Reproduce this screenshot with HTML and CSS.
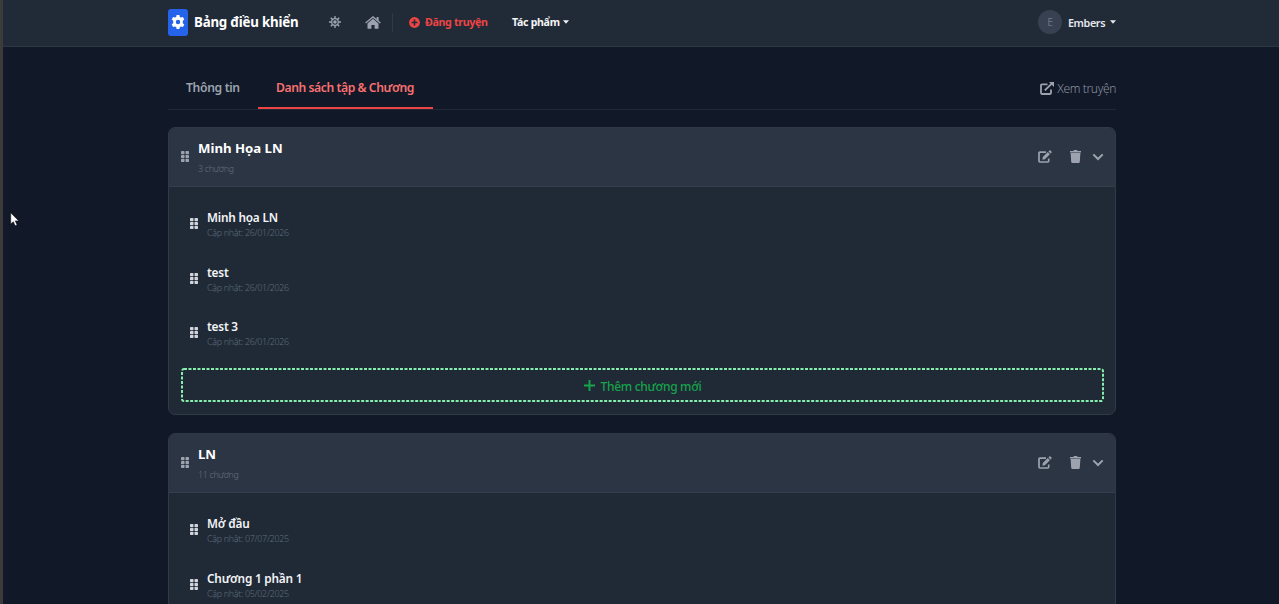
FILE: index.html
```html
<!DOCTYPE html>
<html lang="vi">
<head>
    <meta charset="UTF-8">
    <meta name="viewport" content="width=device-width, initial-scale=1.0">
    <title>Bảng điều khiển</title>

    <link rel="stylesheet" href="styles.css">
</head>
<body>

    <svg class="sprite" xmlns="http://www.w3.org/2000/svg">
        <symbol id="grip" viewBox="0 0 8 11">
            <rect x="0" y="0" width="3.5" height="3.2" rx=".7"/><rect x="4.5" y="0" width="3.5" height="3.2" rx=".7"/>
            <rect x="0" y="3.9" width="3.5" height="3.2" rx=".7"/><rect x="4.5" y="3.9" width="3.5" height="3.2" rx=".7"/>
            <rect x="0" y="7.8" width="3.5" height="3.2" rx=".7"/><rect x="4.5" y="7.8" width="3.5" height="3.2" rx=".7"/>
        </symbol>
        <symbol id="edit" viewBox="0 0 14 13">
            <path d="M8 2.2H1.9Q1 2.2 1 3.1v8Q1 12 1.9 12h7.9q.9 0 .9-.9V8.6" fill="none" stroke="currentColor" stroke-width="1.7"/>
            <path d="M4.4 9.7l.4-2.6 5-5 2.1 2.1-5 5zM10.5 1.4l.8-.8q.6-.6 1.2 0l.9.9q.6.6 0 1.2l-.8.8z"/>
        </symbol>
        <symbol id="trash" viewBox="0 0 11 13">
            <path d="M3.4.9L3.9.1h3.2l.5.8H11v1.5H0V.9zM.6 3.1h9.8l-.6 8.6q-.1 1.2-1.3 1.2h-6q-1.2 0-1.3-1.2z"/>
        </symbol>
        <symbol id="chevron" viewBox="0 0 12 8">
            <path d="M1.3 1.4L6 6l4.7-4.6" fill="none" stroke="currentColor" stroke-width="2"/>
        </symbol>
        <symbol id="caret" viewBox="0 0 6 4">
            <path d="M0 .3h6L3 3.7z"/>
        </symbol>
    </svg>

    <header class="navbar">
        <div class="container nav-inner">
            <div class="logo">
                <svg width="14" height="14" viewBox="0 0 14 14">
                    <path fill="#fff" fill-rule="evenodd" d="M5.6 0h2.8l.4 1.9 1.2.7 1.9-.7 1.4 2.5-1.5 1.4v2.4l1.5 1.4-1.4 2.5-1.9-.7-1.2.7-.4 1.9H5.6l-.4-1.9-1.2-.7-1.9.7L.7 9.6l1.5-1.4V5.8L.7 4.4l1.4-2.5 1.9.7 1.2-.7zM7 4.8a2.2 2.2 0 1 0 0 4.4 2.2 2.2 0 0 0 0-4.4z"/>
                </svg>
            </div>
            <span class="brand">Bảng điều khiển</span>

            <svg class="sun" width="12" height="12" viewBox="0 0 12 12">
                <path fill="none" stroke="currentColor" stroke-width="1.4" d="M6 0v2.5M6 9.5V12M0 6h2.5M9.5 6H12M1.8 1.8l1.7 1.7M8.5 8.5l1.7 1.7M1.8 10.2l1.7-1.7M8.5 3.5l1.7-1.7"/>
                <circle cx="6" cy="6" r="3.3" fill="none" stroke="currentColor" stroke-width="1.3"/>
                <circle cx="6" cy="6" r="1.8"/>
            </svg>
            <svg class="home" width="16" height="13" viewBox="0 0 16 13">
                <path d="M8 2.8l5.5 4.6v4.8q0 .6-.6.6H9.6V8.9H6.4v3.9H3.1q-.6 0-.6-.6V7.4z"/>
                <path d="M.6 7L8 .9 15.4 7" fill="none" stroke="currentColor" stroke-width="1.3"/>
                <path d="M11.6 1h2v4l-2-1.6z"/>
            </svg>
            <span class="divider"></span>

            <a class="post">
                <svg width="11" height="11" viewBox="0 0 11 11">
                    <circle cx="5.5" cy="5.5" r="5.4"/>
                    <path d="M5.5 2.6v5.8M2.6 5.5h5.8" stroke="#1f2937" stroke-width="1.6"/>
                </svg>
                <span>Đăng truyện</span>
            </a>
            <a class="works">
                <span>Tác phẩm</span>
                <svg width="6" height="4"><use href="#caret"/></svg>
            </a>

            <div class="user">
                <span class="avatar">E</span>
                <span class="name">Embers</span>
                <svg width="6" height="4"><use href="#caret"/></svg>
            </div>
        </div>
    </header>

    <main class="container">

        <nav class="tabs">
            <a class="tab tab-info">Thông tin</a>
            <a class="tab tab-list active">Danh sách tập &amp; Chương</a>
            <a class="view">
                <svg width="14" height="13" viewBox="0 0 14 13">
                    <path d="M7.5 2.4H1.9Q1 2.4 1 3.3v7.8q0 .9.9.9h8.2q.9 0 .9-.9V7.6" fill="none" stroke="currentColor" stroke-width="1.8"/>
                    <path d="M4.8 8.4L12 1.4" stroke="currentColor" stroke-width="1.9"/>
                    <path d="M9 0h5v5z"/>
                </svg>
                <span>Xem truyện</span>
            </a>
        </nav>

        <section class="volume">
            <div class="volume-head">
                <svg class="grip" width="8" height="11"><use href="#grip"/></svg>
                <div class="volume-text">
                    <h2>Minh Họa LN</h2>
                    <p>3 chương</p>
                </div>
                <div class="actions">
                    <svg width="14" height="13"><use href="#edit"/></svg>
                    <svg class="trash" width="11" height="13"><use href="#trash"/></svg>
                    <svg class="chevron" width="12" height="8"><use href="#chevron"/></svg>
                </div>
            </div>
            <div class="chapters">
                <div class="chapter">
                    <svg class="grip" width="8" height="11"><use href="#grip"/></svg>
                    <div>
                        <h3>Minh họa LN</h3>
                        <p>Cập nhật: 26/01/2026</p>
                    </div>
                </div>
                <div class="chapter">
                    <svg class="grip" width="8" height="11"><use href="#grip"/></svg>
                    <div>
                        <h3>test</h3>
                        <p>Cập nhật: 26/01/2026</p>
                    </div>
                </div>
                <div class="chapter">
                    <svg class="grip" width="8" height="11"><use href="#grip"/></svg>
                    <div>
                        <h3>test 3</h3>
                        <p>Cập nhật: 26/01/2026</p>
                    </div>
                </div>
                <div class="add">
                    <svg class="dashes" width="923" height="34">
                        <rect x="1" y="1" width="921" height="32" rx="2"/>
                    </svg>
                    <svg width="11" height="11" viewBox="0 0 11 11">
                        <path d="M5.5 0v11M0 5.5h11" stroke="currentColor" stroke-width="1.9"/>
                    </svg>
                    <span>Thêm chương mới</span>
                </div>
            </div>
        </section>

        <section class="volume">
            <div class="volume-head">
                <svg class="grip" width="8" height="11"><use href="#grip"/></svg>
                <div class="volume-text">
                    <h2>LN</h2>
                    <p>11 chương</p>
                </div>
                <div class="actions">
                    <svg width="14" height="13"><use href="#edit"/></svg>
                    <svg class="trash" width="11" height="13"><use href="#trash"/></svg>
                    <svg class="chevron" width="12" height="8"><use href="#chevron"/></svg>
                </div>
            </div>
            <div class="chapters">
                <div class="chapter">
                    <svg class="grip" width="8" height="11"><use href="#grip"/></svg>
                    <div>
                        <h3>Mở đầu</h3>
                        <p>Cập nhật: 07/07/2025</p>
                    </div>
                </div>
                <div class="chapter">
                    <svg class="grip" width="8" height="11"><use href="#grip"/></svg>
                    <div>
                        <h3>Chương 1 phần 1</h3>
                        <p>Cập nhật: 05/02/2025</p>
                    </div>
                </div>
            </div>
        </section>

    </main>

    <svg class="cursor" width="10" height="15" viewBox="0 0 10 15">
        <path d="M.7.8v11.3l2.6-2.4 1.8 4.1 2-.9-1.8-4h3.5z" fill="#fff" stroke="#0b0f18" stroke-width=".6"/>
    </svg>

</body>
</html>
```
FILE: styles.css
```css
*{
    box-sizing: border-box;
    margin: 0;
    padding: 0;
}

body{
    height: 604px;
    overflow: hidden;
    background-color: #111827;
    border-left: 3px solid #3b3b3b;
    font-family: "Noto Sans", "Open Sans", sans-serif;
    font-size: 12px;
    color: #f3f4f6;
}

svg{
    display: block;
    flex-shrink: 0;
    fill: currentColor;
}

.sprite{
    display: none;
}

.container{
    width: 948px;
    margin-left: 165px;
}

.navbar{
    height: 47px;
    background-color: #212b38;
    border-bottom: 1px solid #2c3644;
}

.nav-inner{
    display: flex;
    align-items: center;
    height: 44px;
    white-space: nowrap;
}

.logo{
    width: 20px;
    height: 27px;
    border-radius: 3px;
    background-color: #2563eb;
    display: flex;
    align-items: center;
    justify-content: center;
}

.brand{
    width: 104px;
    margin-left: 6px;
    font-size: 13.3px;
    font-weight: 700;
    letter-spacing: -.2px;
    color: #fff;
}

.sun{
    margin-left: 31px;
    color: #9ca3af;
}

.home{
    margin-left: 24px;
    color: #9ca3af;
}

.divider{
    width: 1px;
    height: 19px;
    margin-left: 11px;
    background-color: #2f3947;
}

.post{
    display: flex;
    align-items: center;
    width: 80px;
    margin-left: 16px;
    gap: 5px;
    font-size: 10.7px;
    font-weight: 700;
    letter-spacing: -.35px;
    color: #ef4444;
}

.works{
    display: flex;
    align-items: center;
    justify-content: space-between;
    width: 57px;
    margin-left: 23px;
    font-size: 10.6px;
    font-weight: 700;
    letter-spacing: -.3px;
}

.user{
    display: flex;
    align-items: center;
    margin-left: auto;
    font-weight: 600;
    color: #e5e7eb;
}

.avatar{
    width: 24px;
    height: 24px;
    border-radius: 50%;
    background-color: #374151;
    color: #6b7280;
    font-size: 10px;
    font-weight: 400;
    line-height: 25px;
    text-align: center;
}

.name{
    width: 42px;
    margin-left: 6px;
    font-size: 10.8px;
    letter-spacing: -.4px;
}

.tabs{
    display: flex;
    height: 46px;
    margin-top: 17px;
    margin-bottom: 17px;
    border-bottom: 1px solid #1f2937;
    white-space: nowrap;
}

.tab{
    height: 45px;
    padding: 0 18px;
    line-height: 48px;
    font-size: 12.2px;
    font-weight: 600;
    letter-spacing: -.45px;
    color: #9ca3af;
    border-bottom: 2px solid transparent;
}

.tab-info{
    width: 90px;
    letter-spacing: -.36px;
}

.tab-list{
    width: 175px;
}

.tab.active{
    color: #f87171;
    border-bottom-color: #ef4444;
}

.view{
    display: flex;
    align-items: center;
    gap: 3px;
    height: 48px;
    margin-left: auto;
    font-size: 12px;
    font-weight: 300;
    letter-spacing: -.36px;
    color: #8b93a0;
}

.view svg{
    color: #9ca3af;
}

.volume{
    height: 288px;
    margin-bottom: 18px;
    border: 1px solid #2f3947;
    border-radius: 7px;
    background-color: #202a37;
    overflow: hidden;
}

.volume-head{
    display: flex;
    align-items: center;
    height: 58.5px;
    padding: 0 12px;
    background-color: #2c3543;
    border-bottom: 1px solid #343e4c;
    color: #9ca3af;
}

.volume-text{
    margin-left: 9px;
    padding-top: 2px;
    white-space: nowrap;
}

.volume h2{
    font-size: 13.2px;
    line-height: 20px;
    font-weight: 700;
    color: #fff;
}

.volume-text p{
    margin-top: 3px;
    font-size: 8.9px;
    line-height: 16px;
    font-weight: 300;
    letter-spacing: -.32px;
    color: #657080;
}

.actions{
    display: flex;
    align-items: center;
    margin-left: auto;
}

.trash{
    margin-left: 18px;
}

.chevron{
    margin: 0 -1px 0 11px;
}

.chapters{
    padding: 9.5px 11px 12px 12px;
}

.chapter{
    display: flex;
    align-items: center;
    height: 54.7px;
    padding-left: 9px;
    white-space: nowrap;
}

.chapter .grip{
    margin-right: 9px;
    color: #d1d5db;
}

.chapter > div{
    padding-top: 3px;
}

.chapter h3{
    font-size: 11.8px;
    line-height: 15px;
    font-weight: 600;
    letter-spacing: -.2px;
    color: #f3f4f6;
}

.chapter p{
    font-size: 8.9px;
    line-height: 15px;
    font-weight: 300;
    letter-spacing: -.28px;
    color: #5f6a7a;
}

.add{
    position: relative;
    display: flex;
    align-items: center;
    justify-content: center;
    gap: 6px;
    height: 34px;
    margin-top: 8px;
    font-size: 12px;
    font-weight: 500;
    letter-spacing: -.3px;
    color: #16a34a;
}

.add span{
    padding-top: 2px;
}

.dashes{
    position: absolute;
    left: 0;
    top: 0;
    fill: none;
    stroke: #86efac;
    stroke-width: 2;
    stroke-dasharray: 3 1.5;
}

.cursor{
    position: absolute;
    left: 10px;
    top: 212px;
}
```
